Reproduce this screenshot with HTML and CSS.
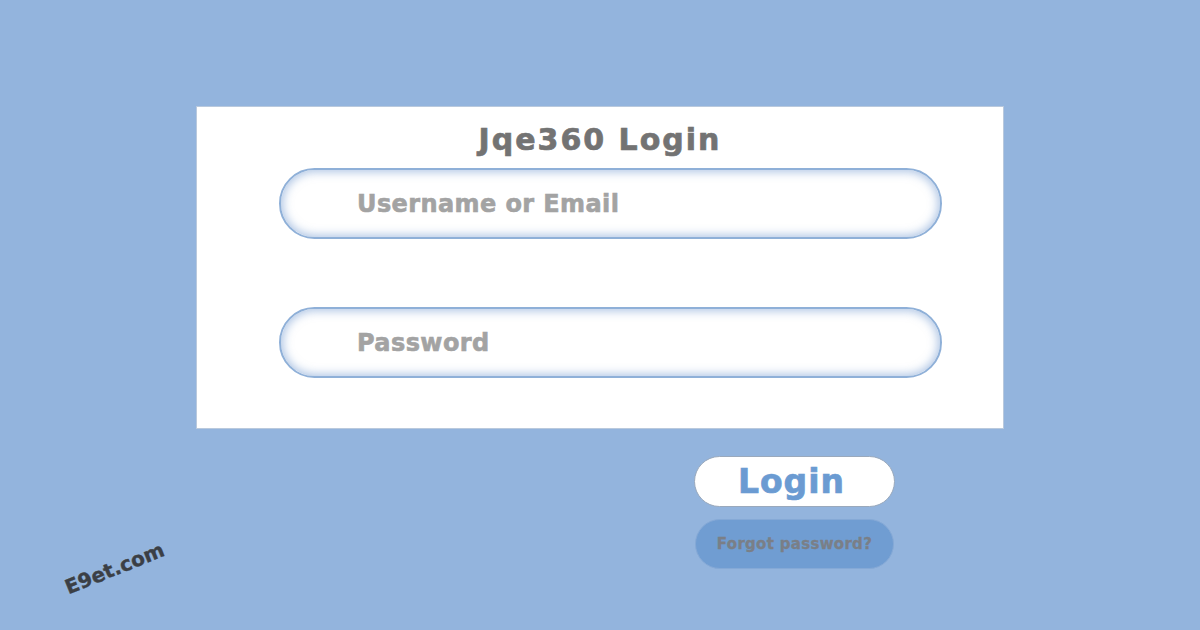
FILE: index.html
```html
<!DOCTYPE html>
<html lang="en">
<head>
  <meta charset="UTF-8" />
  <title>Jqe360 Login</title>
  <link rel="stylesheet" href="styles.css">
</head>
<body>
  <main class="page">
    <form class="card">
      <h1>Jqe360 Login</h1>
      <input class="field" type="text" placeholder="Username or Email" />
      <input class="field" type="password" placeholder="Password" />
    </form>

    <div class="actions">
      <button class="login-btn" type="button">Login</button>
      <button class="forgot-btn" type="button">Forgot password?</button>
    </div>
  </main>

  <div class="watermark">E9et.com</div>
</body>
</html>
```

FILE: styles.css
```css
* { box-sizing: border-box; }

html, body {
  margin: 0;
  height: 100%;
}

body {
  background-color: #93b4dd;
  font-family: 'DejaVu Sans', 'Liberation Sans', sans-serif;
  position: relative;
  overflow: hidden;
}

.page {
  padding: 106px 196px 0;
}

.card {
  width: 808px;
  height: 323px;
  background: #fff;
  border: 1px solid #b9c9dd;
  padding: 14px 0 0 82px;
  display: flex;
  flex-direction: column;
  align-items: flex-start;
}

h1 {
  align-self: stretch;
  margin: 0 82px 9px 0;
  text-align: center;
  font-size: 30px;
  line-height: 38px;
  font-weight: bold;
  letter-spacing: 2px;
  -webkit-text-stroke: 0.7px #737373;
  color: #737373;
}

.field {
  width: 663px;
  height: 71px;
  border-radius: 36px;
  border: 2px solid #8fb0d8;
  background: #fff;
  box-shadow: inset 0 0 10px 2px rgba(110, 150, 205, 0.55);
  padding: 0 0 0 76px;
  font-family: inherit;
  font-size: 24px;
  font-weight: bold;
  letter-spacing: 0.4px;
  outline: none;
}

.field + .field {
  margin-top: 68px;
}

.field::placeholder {
  color: #a3a3a3;
  -webkit-text-stroke: 0.6px #a3a3a3;
  opacity: 1;
}

.actions {
  margin: 27px 0 0 498px;
  display: flex;
  flex-direction: column;
  align-items: flex-start;
  gap: 12px;
}

.login-btn {
  width: 201px;
  height: 51px;
  border-radius: 26px;
  border: 1px solid #9aa9bc;
  background: #fff;
  color: #6b9bd2;
  font-family: inherit;
  font-size: 33px;
  font-weight: bold;
  letter-spacing: 1px;
  -webkit-text-stroke: 0.7px #6b9bd2;
  padding: 0 6px 0 0;
  cursor: pointer;
}

.forgot-btn {
  margin-left: 1px;
  width: 199px;
  height: 50px;
  border-radius: 25px;
  border: 1px solid #85a9d6;
  background: #709dd2;
  color: #7a7f87;
  font-family: inherit;
  font-size: 15px;
  font-weight: bold;
  letter-spacing: 0.3px;
  -webkit-text-stroke: 0.3px #7a7f87;
  padding: 0;
  cursor: pointer;
}

.watermark {
  position: absolute;
  left: 66px;
  top: 576px;
  font-size: 20px;
  font-weight: bold;
  color: #3b3f45;
  -webkit-text-stroke: 0.4px #3b3f45;
  transform: rotate(-22deg);
  transform-origin: left center;
}
```
